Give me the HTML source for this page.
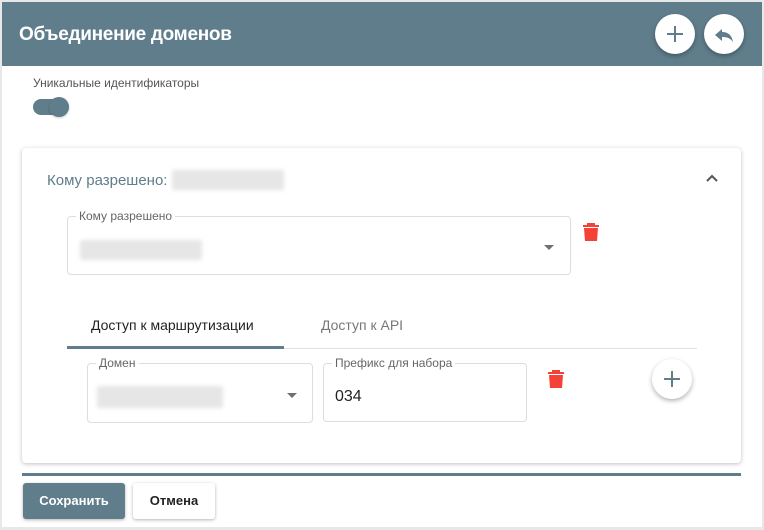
<!DOCTYPE html>
<html><head><meta charset="utf-8"><style>
*{box-sizing:border-box;margin:0;padding:0}
body{width:764px;height:530px;background:#e8e8e8;font-family:"Liberation Sans",sans-serif;position:relative;overflow:hidden}
.page{position:absolute;left:2px;top:2px;width:760px;height:525px;background:#fff}
.hdr{position:absolute;left:2px;top:2px;width:760px;height:64px;background:#607d8b}
.hdr h1{position:absolute;left:17px;top:22px;color:#fff;font-size:19px;font-weight:bold;letter-spacing:-0.3px}
.fab{position:absolute;width:40px;height:40px;border-radius:50%;background:#fff;box-shadow:0 2px 5px rgba(0,0,0,.3)}
.abs{position:absolute}
.blur{position:absolute;background:#e6e6e6;filter:blur(2px);border-radius:2px}
.fld{position:absolute;border:1px solid #ddd;border-radius:4px}
.lbl{position:absolute;background:#fff;font-size:12px;color:#666;padding:0 3px;top:-8px;left:8px}
.arrow{position:absolute;width:0;height:0;border-left:5px solid transparent;border-right:5px solid transparent;border-top:5px solid #707070}
.btn{position:absolute;border-radius:3px;font-size:13px;font-weight:bold;text-align:center;line-height:36px;height:36px}
</style></head><body>
<div class="page"></div>
<div class="hdr"><h1>Объединение доменов</h1></div>
<div class="fab" style="left:655px;top:14px"><svg width="40" height="40"><path d="M20 12v16M12 20h16" stroke="#607d8b" stroke-width="2"/></svg></div>
<div class="fab" style="left:704px;top:14px"><svg width="40" height="40"><path d="M18 15l-7 6 7 6v-4c5 0 8 1 11 5-1-6-4-10-11-10z" fill="#607d8b"/></svg></div>
<div class="abs" style="left:33px;top:76px;font-size:12px;color:#555">Уникальные идентификаторы</div>
<div class="abs" style="left:33px;top:99px;width:36px;height:16px;border-radius:8px;background:#607d8b"></div>
<div class="abs" style="left:49px;top:97px;width:20px;height:20px;border-radius:50%;background:#607d8b;box-shadow:0 1px 2px rgba(0,0,0,.2)"></div>

<div class="abs" style="left:22px;top:148px;width:719px;height:315px;background:#fff;border-radius:4px;box-shadow:0 1px 4px rgba(0,0,0,.25)"></div>
<div class="abs" style="left:47px;top:172px;font-size:15px;color:#607d8b">Кому разрешено:</div>
<div class="blur" style="left:172px;top:170px;width:112px;height:20px"></div>
<svg class="abs" style="left:704px;top:171px" width="16" height="14"><path d="M3 10l5-5 5 5" stroke="#555" stroke-width="2" fill="none"/></svg>

<div class="fld" style="left:67px;top:216px;width:504px;height:59px"><span class="lbl">Кому разрешено</span></div>
<div class="blur" style="left:80px;top:240px;width:122px;height:20px"></div>
<div class="arrow" style="left:544px;top:245px"></div>
<svg class="abs" style="left:582px;top:222px" width="18" height="20"><path d="M5 1h8v2h4v2H1V3h4zM2 6h14l-1 13H3z" fill="#f44336"/></svg>

<div class="abs" style="left:91px;top:317px;font-size:14px;color:#222">Доступ к маршрутизации</div>
<div class="abs" style="left:321px;top:317px;font-size:14px;color:#777">Доступ к API</div>
<div class="abs" style="left:67px;top:348px;width:630px;height:1px;background:#e0e0e0"></div>
<div class="abs" style="left:67px;top:346px;width:217px;height:3px;background:#607d8b"></div>

<div class="fld" style="left:87px;top:363px;width:226px;height:60px"><span class="lbl">Домен</span></div>
<div class="blur" style="left:97px;top:386px;width:126px;height:22px"></div>
<div class="arrow" style="left:287px;top:393px"></div>
<div class="fld" style="left:323px;top:363px;width:204px;height:59px"><span class="lbl">Префикс для набора</span></div>
<div class="abs" style="left:335px;top:388px;font-size:16px;color:#222">034</div>
<svg class="abs" style="left:547px;top:369px" width="18" height="20"><path d="M5 1h8v2h4v2H1V3h4zM2 6h14l-1 13H3z" fill="#f44336"/></svg>
<div class="fab" style="left:652px;top:359px"><svg width="40" height="40"><path d="M20 12v16M12 20h16" stroke="#607d8b" stroke-width="2"/></svg></div>

<div class="abs" style="left:22px;top:473px;width:719px;height:3px;background:#607d8b"></div>
<div class="btn" style="left:23px;top:483px;width:102px;background:#607d8b;color:#fff;box-shadow:0 1px 3px rgba(0,0,0,.3)">Сохранить</div>
<div class="btn" style="left:133px;top:483px;width:82px;background:#fff;color:#222;box-shadow:0 1px 3px rgba(0,0,0,.3)">Отмена</div>
</body></html>
